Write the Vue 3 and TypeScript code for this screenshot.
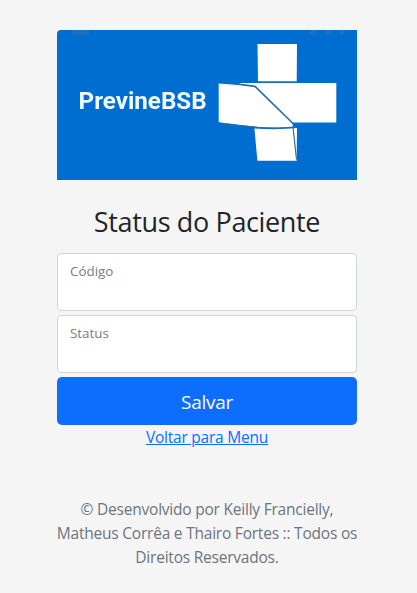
<script setup lang="ts">
import { ref } from 'vue'

interface Field {
  id: string
  label: string
}

const fields: Field[] = [
  { id: 'codigo', label: 'Código' },
  { id: 'status', label: 'Status' },
]
const values = ref<Record<string, string>>({ codigo: '', status: '' })

const credits: string[] = [
  '© Desenvolvido por Keilly Francielly,',
  'Matheus Corrêa e Thairo Fortes :: Todos os',
  'Direitos Reservados.',
]
</script>

<template>
  <main class="page">
    <form class="form" @submit.prevent>
      <svg class="logo" viewBox="0 0 300 150" role="img" aria-label="PrevineBSB">
        <defs>
          <filter id="soft" x="-5%" y="-5%" width="110%" height="110%">
            <feGaussianBlur stdDeviation="0.55" />
          </filter>
        </defs>
        <rect width="300" height="150" fill="#006dd1" />
        <g filter="url(#soft)">
          <g fill="#1c70c4">
            <rect x="15" y="0" width="17" height="5" />
            <rect x="253" y="0" width="7" height="5" />
            <rect x="268" y="0" width="7" height="5" />
            <path d="M281 0h7l-2 5h-3z" />
          </g>
          <text x="21.6" y="79.3" class="brand" textLength="128" lengthAdjust="spacingAndGlyphs">PrevineBSB</text>
          <g fill="#fff">
            <path d="M200.5 14H240L239.7 51.5H201z" />
            <path d="M161.7 53.5L181 55L183 53H279.3V92.4H235.3L236 96.5Q221 98.4 203 97Q181 95 161.7 92.3z" />
            <path d="M197.4 98.5Q220 100 240 98L239.7 130.8H200.4z" />
          </g>
          <g fill="none" stroke="#2a7199" stroke-linejoin="round">
            <path d="M179 53.8L198 56.3L236.5 94" stroke-width="1.7" />
            <path d="M201 52H240" stroke-width="1" />
            <path d="M236 97L239.5 129.5" stroke-width="1.2" />
            <path d="M162 93Q185 96 203 97.6Q221 99 239 97.3" stroke-width="1" />
          </g>
        </g>
      </svg>

      <h1 class="title">Status do Paciente</h1>

      <div class="fields">
        <div v-for="field in fields" :key="field.id" class="field">
          <label :for="field.id">{{ field.label }}</label>
          <input :id="field.id" v-model="values[field.id]" type="text" />
        </div>
        <button class="save" type="submit">Salvar</button>
      </div>

      <a class="back" href="#">Voltar para Menu</a>

      <p class="credits">
        <span v-for="line in credits" :key="line">{{ line }}</span>
      </p>
    </form>
  </main>
</template>

<style>
body {
  background: #f5f5f5;
}
</style>

<style scoped>
.page {
  box-sizing: border-box;
  width: 417px;
  height: 593px;
  padding: 30px 60px 0 57px;
  background: #f5f5f5;
  font-family: 'Open Sans', 'Noto Sans', sans-serif;
  color: #212529;
  overflow: hidden;
}

.form {
  display: flex;
  flex-direction: column;
  width: 300px;
  text-align: center;
}

.logo {
  display: block;
  width: 300px;
  height: 150px;
  border-top-left-radius: 4px;
}

.brand {
  font-family: Roboto, sans-serif;
  font-size: 24.8px;
  font-weight: 700;
  fill: #eefaff;
}

.title {
  margin: 24px 0 14px;
  font-size: 27px;
  font-weight: 400;
  line-height: 35px;
  letter-spacing: -0.36px;
  white-space: nowrap;
}

.fields {
  display: flex;
  flex-direction: column;
  gap: 4px;
}

.field {
  box-sizing: border-box;
  display: flex;
  flex-direction: column;
  height: 58px;
  padding: 7px 12px 0;
  border: 1px solid #ced4da;
  border-radius: 4px;
  background: #fff;
  text-align: left;
}

.field label {
  font-size: 13.4px;
  line-height: 20px;
  letter-spacing: 0;
  color: #797c7e;
}

.field input {
  width: 100%;
  height: 24px;
  padding: 0;
  border: 0;
  outline: 0;
  background: transparent;
  font: inherit;
}

.save {
  height: 48px;
  padding: 2px 0 0;
  border: 0;
  border-radius: 5px;
  background: #0d6efd;
  color: #fff;
  font-family: inherit;
  font-size: 19px;
  line-height: 46px;
  letter-spacing: -0.3px;
}

.back {
  align-self: center;
  font-size: 15.5px;
  line-height: 24px;
  letter-spacing: -0.22px;
  color: #0d6efd;
}

.credits {
  display: flex;
  flex-direction: column;
  align-items: center;
  margin: 48px 0 0;
  font-size: 15.5px;
  line-height: 24px;
  letter-spacing: -0.22px;
  color: #6c757d;
  white-space: nowrap;
}
</style>
